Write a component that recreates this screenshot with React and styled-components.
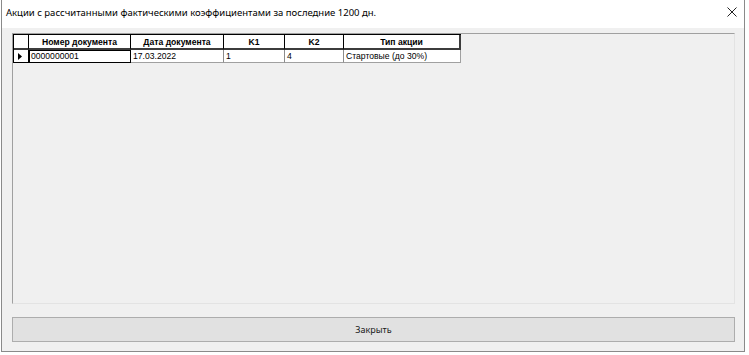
import styled, { createGlobalStyle } from "styled-components";

const GlobalStyle = createGlobalStyle`
  html, body {
    margin: 0;
    padding: 0;
    background: #ffffff;
  }
  body {
    padding-left: 1px;
  }
`;

const Window = styled.div`
  width: 744px;
  border: 1px solid #8a8a8a;
  border-top: none;
  display: flex;
  flex-direction: column;
  background: #f0f0f0;
  box-sizing: border-box;
`;

const TitleBar = styled.div`
  height: 28px;
  background: #ffffff;
  display: flex;
  align-items: center;
  justify-content: space-between;
  padding: 0 7px 4px 4px;
  font-family: "Segoe UI", "Noto Sans", sans-serif;
  font-size: 9.5px;
  color: #000;
  box-sizing: border-box;
`;

const CloseIcon = styled.svg`
  width: 10px;
  height: 10px;
`;

const Client = styled.div`
  padding: 5px 9px 9px 10px;
  display: flex;
  flex-direction: column;
  gap: 13px;
`;

const GridPanel = styled.div`
  height: 271px;
  border-top: 1px solid #a0a0a0;
  border-left: 1px solid #a0a0a0;
  border-right: 1px solid #e3e3e3;
  border-bottom: 1px solid #e3e3e3;
  background: #f0f0f0;
  box-sizing: border-box;
`;

const Table = styled.table`
  border-collapse: separate;
  border-spacing: 0;
  table-layout: fixed;
  width: 448px;
  border-top: 1px solid #000;
  border-left: 1px solid #000;
  font-family: "Liberation Sans", Arial, sans-serif;
  font-size: 8.6px;
  color: #000;
`;

const HeadCell = styled.th`
  width: ${(p) => p.$w}px;
  height: 15px;
  padding: 0;
  background: #ffffff;
  font-weight: bold;
  text-align: center;
  border-right: ${(p) => (p.$last ? "2px solid #3c3c3c" : "1px solid #000")};
  border-bottom: 2px solid #3c3c3c;
  box-sizing: border-box;
  line-height: 12px;
`;

const RowHead = styled.td`
  height: 13px;
  padding: 0;
  background: #ffffff;
  border-right: 1px solid #000;
  border-bottom: 1px solid #000;
  box-sizing: border-box;
`;

const Arrow = styled.svg`
  width: 4px;
  height: 7px;
  display: block;
  margin: 0 0 0 4px;
`;

const Cell = styled.td`
  height: 13px;
  padding: 0 0 0 2px;
  background: #ffffff;
  border-right: 1px solid ${(p) => (p.$last ? "#a0a0a0" : "#8c8c8c")};
  border-bottom: 1px solid #a0a0a0;
  outline: ${(p) => (p.$focus ? "1px solid #000" : "none")};
  outline-offset: -1px;
  box-sizing: border-box;
  white-space: nowrap;
  overflow: hidden;
  line-height: 11px;
`;

const Button = styled.button`
  height: 25px;
  width: 100%;
  background: #e1e1e1;
  border: 1px solid #adadad;
  font-family: "Segoe UI", "Noto Sans", sans-serif;
  font-size: 9px;
  color: #1a1a1a;
  padding: 0;
`;

const columns = [
  { title: "Номер документа", w: 102 },
  { title: "Дата документа", w: 93 },
  { title: "K1", w: 61 },
  { title: "K2", w: 59 },
  { title: "Тип акции", w: 117 },
];

const rows = [["0000000001", "17.03.2022", "1", "4", "Стартовые (до 30%)"]];

export default function App() {
  return (
    <>
      <GlobalStyle />
      <Window>
        <TitleBar>
          <span>Акции с рассчитанными фактическими коэффициентами за последние 1200 дн.</span>
          <CloseIcon viewBox="0 0 10 10">
            <path d="M0.5 0.5L9.5 9.5M9.5 0.5L0.5 9.5" stroke="#222" strokeWidth="1" />
          </CloseIcon>
        </TitleBar>
        <Client>
          <GridPanel>
            <Table>
              <thead>
                <tr>
                  <HeadCell $w={15} />
                  {columns.map((c, i) => (
                    <HeadCell key={c.title} $w={c.w} $last={i === columns.length - 1}>
                      {c.title}
                    </HeadCell>
                  ))}
                </tr>
              </thead>
              <tbody>
                {rows.map((r, i) => (
                  <tr key={i}>
                    <RowHead>
                      <Arrow viewBox="0 0 4 7">
                        <path d="M0 0L4 3.5L0 7Z" fill="#000" />
                      </Arrow>
                    </RowHead>
                    {r.map((v, j) => (
                      <Cell key={j} $focus={j === 0} $last={j === r.length - 1}>
                        {v}
                      </Cell>
                    ))}
                  </tr>
                ))}
              </tbody>
            </Table>
          </GridPanel>
          <Button>Закрыть</Button>
        </Client>
      </Window>
    </>
  );
}
